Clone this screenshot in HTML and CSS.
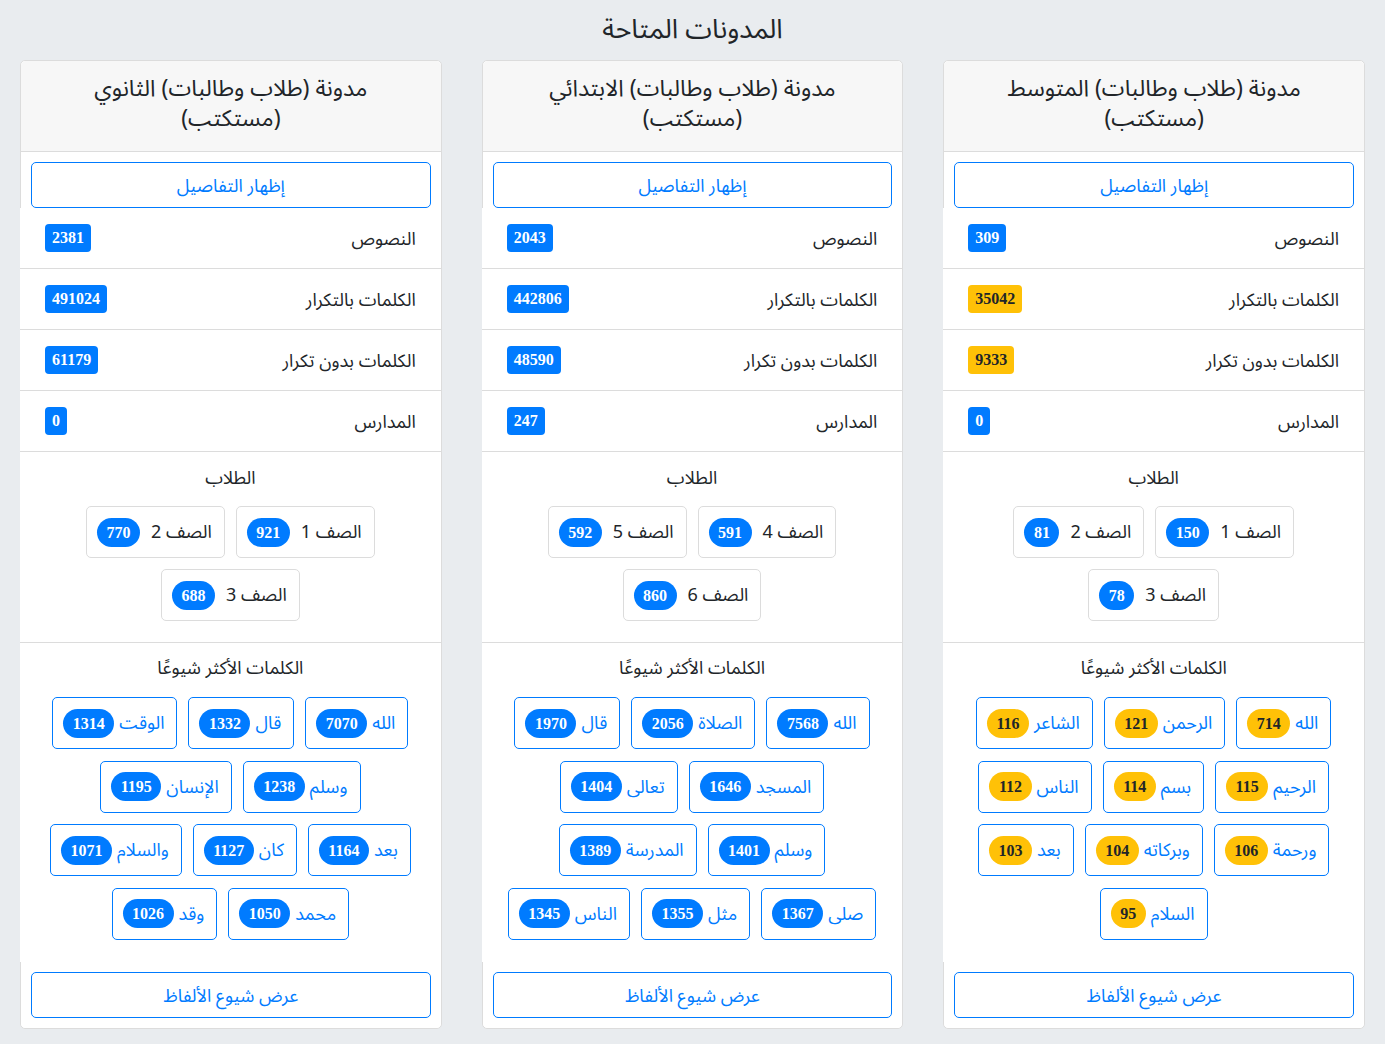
FILE: index.html
```html
<!DOCTYPE html>
<html lang="ar" dir="rtl">

<head>
    <meta charset="UTF-8">
    <meta name="viewport" content="width=device-width, initial-scale=1.0">
    <title>المدونات المتاحة</title>
    <link rel="stylesheet" href="styles.css">
</head>

<body>
    <h1 class="page-title">المدونات المتاحة</h1>

    <div class="blogs">
        <!-- المتوسط -->
        <div class="blog-col">
            <div class="card">
                <div class="card-header">مدونة (طلاب وطالبات) المتوسط<br>(مستكتب)</div>
                <div class="card-top">
                    <a class="btn-outline" href="#">إظهار التفاصيل</a>
                </div>
                <div class="card-main">
                    <div class="stat-row"><span>النصوص</span><span class="badge">309</span></div>
                    <div class="stat-row"><span>الكلمات بالتكرار</span><span class="badge badge-warning">35042</span></div>
                    <div class="stat-row"><span>الكلمات بدون تكرار</span><span class="badge badge-warning">9333</span></div>
                    <div class="stat-row"><span>المدارس</span><span class="badge">0</span></div>

                    <div class="students">
                        <h2 class="section-title">الطلاب</h2>
                        <div class="chips">
                            <span class="grade">الصف 1<span class="pill">150</span></span>
                            <span class="grade">الصف 2<span class="pill">81</span></span>
                            <span class="grade">الصف 3<span class="pill">78</span></span>
                        </div>
                    </div>

                    <div class="words">
                        <h2 class="section-title">الكلمات الأكثر شيوعًا</h2>
                        <div class="chips">
                            <span class="word">الله<span class="pill pill-warning">714</span></span>
                            <span class="word">الرحمن<span class="pill pill-warning">121</span></span>
                            <span class="word">الشاعر<span class="pill pill-warning">116</span></span>
                            <span class="word">الرحيم<span class="pill pill-warning">115</span></span>
                            <span class="word">بسم<span class="pill pill-warning">114</span></span>
                            <span class="word">الناس<span class="pill pill-warning">112</span></span>
                            <span class="word">ورحمة<span class="pill pill-warning">106</span></span>
                            <span class="word">وبركاته<span class="pill pill-warning">104</span></span>
                            <span class="word">بعد<span class="pill pill-warning">103</span></span>
                            <span class="word">السلام<span class="pill pill-warning">95</span></span>
                        </div>
                    </div>
                </div>
                <div class="card-footer">
                    <a class="btn-outline" href="#">عرض شيوع الألفاظ</a>
                </div>
            </div>
        </div>

        <!-- الابتدائي -->
        <div class="blog-col">
            <div class="card">
                <div class="card-header">مدونة (طلاب وطالبات) الابتدائي<br>(مستكتب)</div>
                <div class="card-top">
                    <a class="btn-outline" href="#">إظهار التفاصيل</a>
                </div>
                <div class="card-main">
                    <div class="stat-row"><span>النصوص</span><span class="badge">2043</span></div>
                    <div class="stat-row"><span>الكلمات بالتكرار</span><span class="badge">442806</span></div>
                    <div class="stat-row"><span>الكلمات بدون تكرار</span><span class="badge">48590</span></div>
                    <div class="stat-row"><span>المدارس</span><span class="badge">247</span></div>

                    <div class="students">
                        <h2 class="section-title">الطلاب</h2>
                        <div class="chips">
                            <span class="grade">الصف 4<span class="pill">591</span></span>
                            <span class="grade">الصف 5<span class="pill">592</span></span>
                            <span class="grade">الصف 6<span class="pill">860</span></span>
                        </div>
                    </div>

                    <div class="words">
                        <h2 class="section-title">الكلمات الأكثر شيوعًا</h2>
                        <div class="chips">
                            <span class="word">الله<span class="pill">7568</span></span>
                            <span class="word">الصلاة<span class="pill">2056</span></span>
                            <span class="word">قال<span class="pill">1970</span></span>
                            <span class="word">المسجد<span class="pill">1646</span></span>
                            <span class="word">تعالى<span class="pill">1404</span></span>
                            <span class="word">وسلم<span class="pill">1401</span></span>
                            <span class="word">المدرسة<span class="pill">1389</span></span>
                            <span class="word">صلى<span class="pill">1367</span></span>
                            <span class="word">مثل<span class="pill">1355</span></span>
                            <span class="word">الناس<span class="pill">1345</span></span>
                        </div>
                    </div>
                </div>
                <div class="card-footer">
                    <a class="btn-outline" href="#">عرض شيوع الألفاظ</a>
                </div>
            </div>
        </div>

        <!-- الثانوي -->
        <div class="blog-col">
            <div class="card">
                <div class="card-header">مدونة (طلاب وطالبات) الثانوي<br>(مستكتب)</div>
                <div class="card-top">
                    <a class="btn-outline" href="#">إظهار التفاصيل</a>
                </div>
                <div class="card-main">
                    <div class="stat-row"><span>النصوص</span><span class="badge">2381</span></div>
                    <div class="stat-row"><span>الكلمات بالتكرار</span><span class="badge">491024</span></div>
                    <div class="stat-row"><span>الكلمات بدون تكرار</span><span class="badge">61179</span></div>
                    <div class="stat-row"><span>المدارس</span><span class="badge">0</span></div>

                    <div class="students">
                        <h2 class="section-title">الطلاب</h2>
                        <div class="chips">
                            <span class="grade">الصف 1<span class="pill">921</span></span>
                            <span class="grade">الصف 2<span class="pill">770</span></span>
                            <span class="grade">الصف 3<span class="pill">688</span></span>
                        </div>
                    </div>

                    <div class="words">
                        <h2 class="section-title">الكلمات الأكثر شيوعًا</h2>
                        <div class="chips">
                            <span class="word">الله<span class="pill">7070</span></span>
                            <span class="word">قال<span class="pill">1332</span></span>
                            <span class="word">الوقت<span class="pill">1314</span></span>
                            <span class="word">وسلم<span class="pill">1238</span></span>
                            <span class="word">الإنسان<span class="pill">1195</span></span>
                            <span class="word">بعد<span class="pill">1164</span></span>
                            <span class="word">كان<span class="pill">1127</span></span>
                            <span class="word">والسلام<span class="pill">1071</span></span>
                            <span class="word">محمد<span class="pill">1050</span></span>
                            <span class="word">وقد<span class="pill">1026</span></span>
                        </div>
                    </div>
                </div>
                <div class="card-footer">
                    <a class="btn-outline" href="#">عرض شيوع الألفاظ</a>
                </div>
            </div>
        </div>
    </div>
</body>

</html>
```

FILE: styles.css
```css
* {
    margin: 0;
    padding: 0;
    box-sizing: border-box;
}

body {
    background-color: #e9ecef;
    font-family: 'Noto Sans', 'Noto Sans Arabic', sans-serif;
    color: #212529;
    direction: rtl;
}

.page-title {
    text-align: center;
    font-size: 27px;
    font-weight: 400;
    line-height: 36px;
    padding-top: 10px;
    margin-bottom: 14px;
}

.blogs {
    display: grid;
    grid-template-columns: repeat(3, 1fr);
}

.blog-col {
    padding: 0 20px;
}

.card {
    display: flex;
    flex-direction: column;
    height: 100%;
    background-color: #fff;
    border: 1px solid #dcdcdc;
    border-radius: 5px;
}

.card-header {
    padding: 11px 20px 19px;
    font-size: 23px;
    line-height: 30px;
    text-align: center;
    background-color: #f7f7f7;
    border-bottom: 1px solid #dcdcdc;
    border-radius: 5px 5px 0 0;
}

.card-top {
    padding: 10px 10px 0;
}

.btn-outline {
    display: block;
    padding: 9px;
    font-size: 18px;
    line-height: 26px;
    text-align: center;
    text-decoration: none;
    color: #007bff;
    background-color: #fff;
    border: 1px solid #007bff;
    border-radius: 5px;
}

/* the body of the card sits over the card's left edge */
.card-main {
    flex: 1;
    display: flex;
    flex-direction: column;
    margin-left: -1px;
    background-color: #fff;
}

.stat-row {
    display: flex;
    justify-content: space-between;
    align-items: center;
    padding: 16px 25px;
    font-size: 18px;
    line-height: 28px;
    border-bottom: 1px solid #dcdcdc;
}

.badge {
    font-family: 'Liberation Serif', serif;
    font-weight: 700;
    font-size: 16px;
    line-height: 18px;
    padding: 5px 7px;
    border-radius: 4px;
    color: #fff;
    background-color: #007bff;
}

.badge-warning {
    color: #212529;
    background-color: #ffc107;
}

.section-title {
    font-size: 18px;
    font-weight: 400;
    line-height: 27px;
    text-align: center;
    margin-bottom: 15px;
}

.students {
    padding: 12px 10px 21px;
    border-bottom: 1px solid #dcdcdc;
}

.words {
    flex: 1;
    padding: 11px 25px 22px;
}

.words .section-title {
    margin-bottom: 16px;
}

.chips {
    display: flex;
    flex-wrap: wrap;
    justify-content: center;
    gap: 11.4px 11px;
}

.grade,
.word {
    display: inline-flex;
    align-items: center;
    height: 52px;
    background-color: #fff;
    border: 1px solid #dcdcdc;
    border-radius: 5px;
}

.grade {
    gap: 11px;
    padding: 0 12px 0 10px;
    font-size: 18px;
}

.word {
    gap: 5px;
    padding: 0 12px 0 10px;
    font-size: 18px;
    color: #007bff;
    border-color: #007bff;
}

.pill {
    font-family: 'Liberation Serif', serif;
    font-weight: 700;
    font-size: 16px;
    line-height: 19px;
    padding: 5px 9.5px;
    border-radius: 15px;
    color: #fff;
    background-color: #007bff;
}

.pill-warning {
    color: #212529;
    background-color: #ffc107;
}

.card-footer {
    padding: 10px;
    background-color: #fff;
    border-radius: 0 0 5px 5px;
}
```
